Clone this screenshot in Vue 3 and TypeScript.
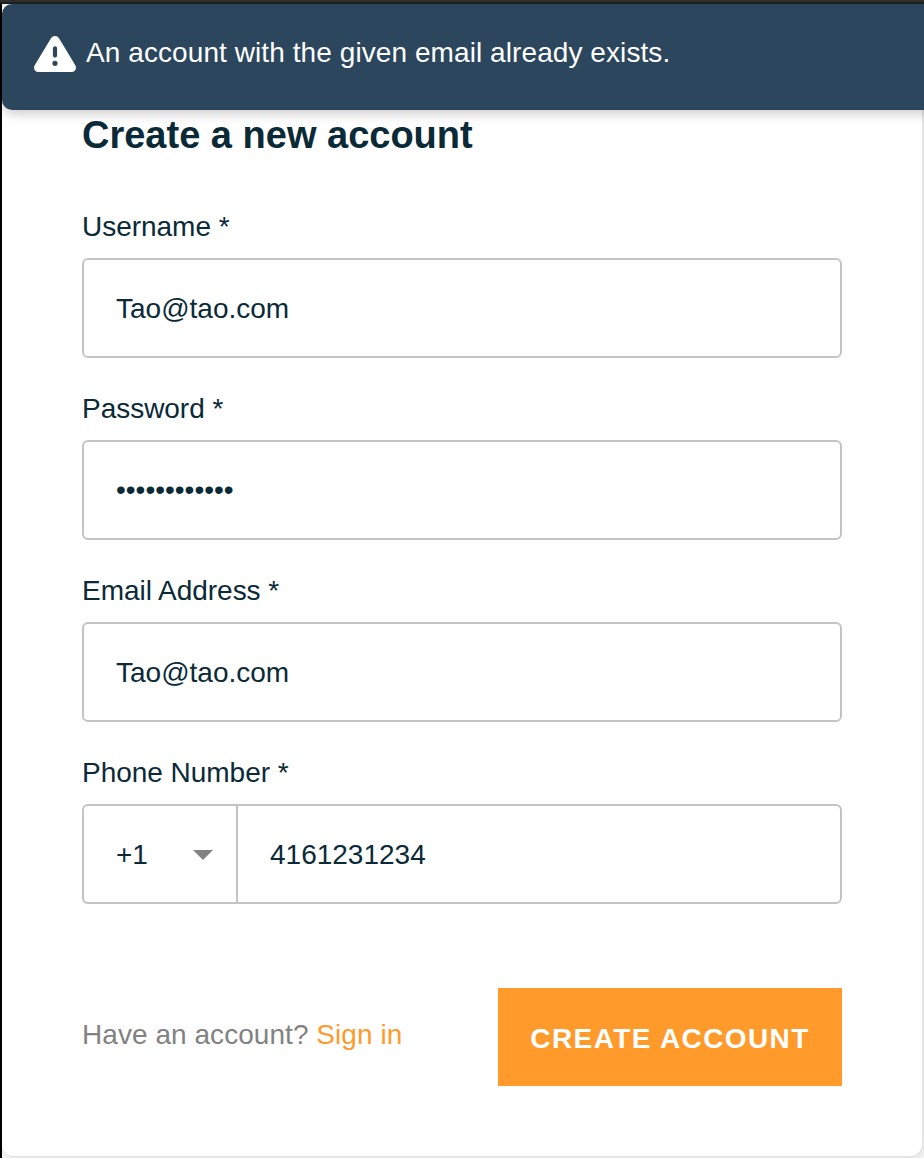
<script setup lang="ts">
import { ref } from 'vue'

interface Field {
  id: string
  label: string
  type: string
  value: string
}

const message = 'An account with the given email already exists.'
const fields = ref<Field[]>([
  { id: 'username', label: 'Username *', type: 'text', value: 'Tao@tao.com' },
  { id: 'password', label: 'Password *', type: 'password', value: '123456789012' },
  { id: 'email', label: 'Email Address *', type: 'text', value: 'Tao@tao.com' },
])
const dialCode = ref('+1')
const phone = ref('4161231234')
</script>

<template>
  <div class="page">
    <div class="top-edge"></div>
    <div class="body">
      <div class="left-edge"></div>
      <main class="stage">
        <div class="card">
          <div class="toast" role="alert">
            <svg class="warn" width="42" height="36" viewBox="0 0 42 36" aria-hidden="true">
              <path
                fill="#fff"
                fill-rule="evenodd"
                d="M17 2.2C18.8-.7 23.2-.7 25 2.2L41.3 29.2C43.1 32.3 41.2 36 37.5 36H4.5C.8 36-1.1 32.3.7 29.2ZM21 10.2C19.9 10.2 18.9 11 18.9 12.2V19.4C18.9 20.6 19.9 21.5 21 21.5S23.1 20.6 23.1 19.4V12.2C23.1 11 22.1 10.2 21 10.2ZM21 24.7A2.6 2.6 0 1 0 21 29.9A2.6 2.6 0 1 0 21 24.7Z"
              />
            </svg>
            <span class="message">{{ message }}</span>
          </div>
          <form class="form" @submit.prevent>
            <h1 class="title">Create a new account</h1>
            <div v-for="field in fields" :key="field.id" class="field">
              <label class="label" :for="field.id">{{ field.label }}</label>
              <input
                :id="field.id"
                v-model="field.value"
                class="input"
                :class="{ secret: field.type === 'password' }"
                :type="field.type"
              />
            </div>
            <div class="field">
              <label class="label" for="phone">Phone Number *</label>
              <div class="phone">
                <button type="button" class="code">
                  <span>{{ dialCode }}</span>
                  <svg width="20" height="10" viewBox="0 0 20 10" aria-hidden="true">
                    <path d="M0 0H20L10 10Z" fill="#828282" />
                  </svg>
                </button>
                <input id="phone" v-model="phone" class="input number" type="text" />
              </div>
            </div>
            <footer class="footer">
              <span class="hint">Have an account? <a class="link">Sign in</a></span>
              <button class="submit" type="submit">CREATE ACCOUNT</button>
            </footer>
          </form>
        </div>
      </main>
    </div>
  </div>
</template>

<style>
body {
  margin: 0;
}
</style>

<style scoped>
.page {
  box-sizing: border-box;
  width: 924px;
  height: 1158px;
  overflow: hidden;
  display: flex;
  flex-direction: column;
  font-family: 'Liberation Sans', Arial, sans-serif;
  font-size: 28px;
  line-height: 32px;
  color: #0a2a38;
}
.top-edge {
  height: 4px;
  flex: none;
  background: linear-gradient(#2e2e2e 50%, #1d1f1e 50%);
}
.body {
  flex: 1;
  min-height: 0;
  display: flex;
}
.left-edge {
  width: 2px;
  flex: none;
  background: #000;
}
.stage {
  flex: 1;
  min-width: 0;
  overflow: hidden;
  background: #f8f8f8;
}
.card {
  width: 920px;
  height: 1152px;
  border-radius: 12px;
  background: #fff;
  box-shadow: 2px 2px 8px rgba(0, 0, 0, 0.13);
}
.toast {
  box-sizing: border-box;
  width: 940px;
  height: 106px;
  padding: 32px 32px 0;
  display: flex;
  align-items: flex-start;
  gap: 10px;
  border-radius: 10px;
  background: #2b465d;
  box-shadow: 0 4px 12px rgba(0, 0, 0, 0.2);
  color: #fff;
}
.warn {
  flex: none;
}
.message {
  margin-top: 1px;
  white-space: nowrap;
  letter-spacing: 0.08px;
}
.form {
  padding: 5px 80px 0;
}
.title {
  margin: 0 0 55px;
  font-size: 38px;
  line-height: 41px;
  font-weight: 700;
}
.field {
  margin-bottom: 35px;
}
.label {
  display: block;
  margin-bottom: 15px;
  letter-spacing: -0.03px;
}
.input {
  display: block;
  box-sizing: border-box;
  width: 760px;
  height: 100px;
  margin: 0;
  padding: 2px 32px 0;
  border: 2px solid #c4c4c4;
  border-radius: 6px;
  outline: none;
  background: #fff;
  color: inherit;
  font: inherit;
}
.secret {
  padding-top: 0;
}
.phone {
  display: flex;
}
.code {
  box-sizing: border-box;
  width: 154px;
  height: 100px;
  padding: 2px 23px 0 32px;
  display: flex;
  align-items: center;
  justify-content: space-between;
  border: 2px solid #c4c4c4;
  border-right: 0;
  border-radius: 6px 0 0 6px;
  background: #fff;
  color: inherit;
  font: inherit;
}
.number {
  width: 606px;
  border-radius: 0 6px 6px 0;
}
.footer {
  display: flex;
  align-items: center;
  justify-content: space-between;
  margin-top: 84px;
}
.hint {
  margin-bottom: 4px;
  color: #828282;
  letter-spacing: 0.05px;
}
.link {
  color: #ff9a2b;
}
.submit {
  width: 344px;
  height: 98px;
  padding: 4px 0 0;
  border: 0;
  background: #ff9a2b;
  color: #fff;
  font: inherit;
  font-weight: 700;
  letter-spacing: 1.4px;
  white-space: nowrap;
}
</style>
